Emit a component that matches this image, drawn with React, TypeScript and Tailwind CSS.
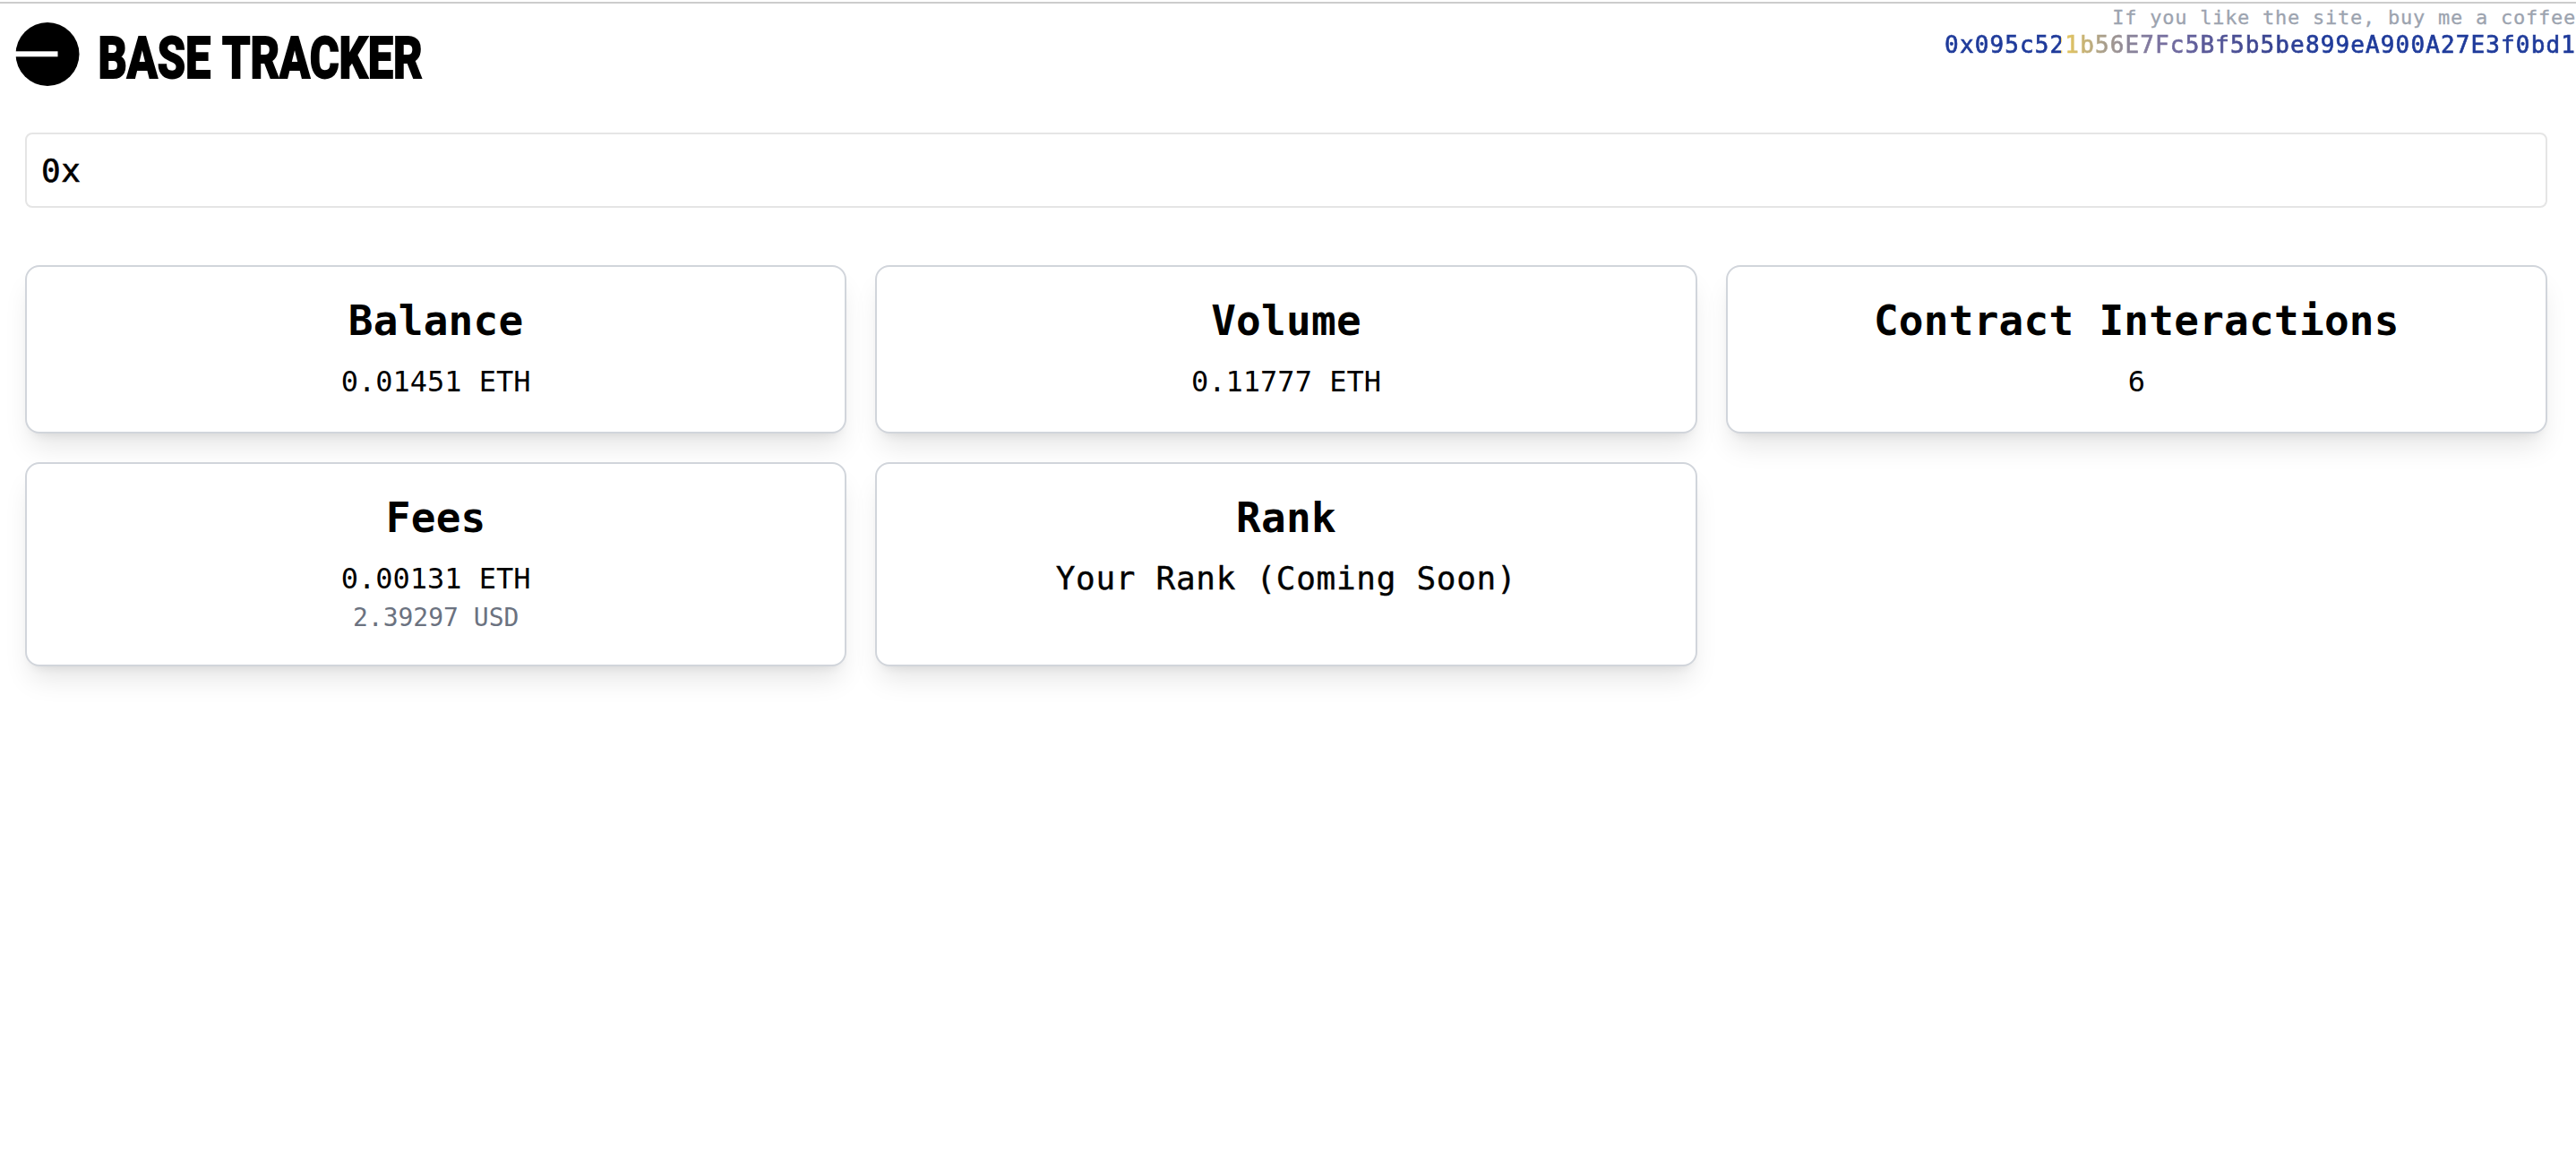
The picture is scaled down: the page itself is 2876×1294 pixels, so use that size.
import clsx from 'clsx'

interface StatCardProps {
  title: string
  value: string
  subValue?: string
  placeholder?: boolean
}

function StatCard({ title, value, subValue, placeholder }: StatCardProps) {
  return (
    <div className="bg-white border-2 border-[#d1d5db] rounded-2xl p-8 pt-7 text-center shadow-[0_20px_30px_-6px_rgba(0,0,0,0.1),0_8px_12px_-8px_rgba(0,0,0,0.1)]">
      <h2 className="text-[46px] leading-16 font-bold tracking-[0.25px]">{title}</h2>
      <p
        className={clsx(
          placeholder
            ? 'mt-2 text-[36px] leading-14 tracking-[0.7px] [-webkit-text-stroke:0.4px_currentColor]'
            : 'mt-3 text-[32px] leading-12'
        )}
      >
        {value}
      </p>
      {subValue && <p className="text-[28px] leading-10 text-[#6b7280]">{subValue}</p>}
    </div>
  )
}

function Logo() {
  return (
    <svg
      width="560"
      height="104"
      viewBox="0 0 560 104"
      className="overflow-visible"
      role="img"
      aria-label="Base Tracker"
    >
      <circle cx="53" cy="56.5" r="35.5" />
      <rect x="16" y="53.3" width="48.5" height="6" fill="#fff" />
      <text
        x="109.5"
        y="82.5"
        fontFamily="Roboto, sans-serif"
        fontWeight="800"
        fontSize="65"
        textLength="362"
        lengthAdjust="spacingAndGlyphs"
        wordSpacing="2"
        stroke="#000"
        strokeWidth="2"
      >
        BASE TRACKER
      </text>
    </svg>
  )
}

export default function App() {
  const stats = [
    { title: 'Balance', value: '0.01451 ETH' },
    { title: 'Volume', value: '0.11777 ETH' },
    { title: 'Contract Interactions', value: '6' },
    { title: 'Fees', value: '0.00131 ETH', subValue: '2.39297 USD' },
    { title: 'Rank', value: 'Your Rank (Coming Soon)', placeholder: true },
  ]

  return (
    <div className="min-h-screen bg-white pt-0.5 text-black font-['DejaVu_Sans_Mono',monospace]">
      <header className="flex justify-between items-start border-t-2 border-[#cccccc] h-[146px]">
        <Logo />
        <div className="text-right whitespace-nowrap">
          <p className="text-[22px] leading-[31px] tracking-[0.75px] text-[#9ca3af] [-webkit-text-stroke:0.3px_currentColor]">
            If you like the site, buy me a coffee
          </p>
          <p className="text-[26px] leading-[30px] tracking-[1.13px] bg-clip-text text-transparent [-webkit-text-stroke:0.7px_transparent] bg-[linear-gradient(90deg,#1e3a9a_0%,#1e3a9a_18.5%,#eccb5a_18.5%,#aba08a_25%,#8c8699_29%,#7a72a0_34%,#5f5d9a_40%,#3c4590_50%,#1e3a9a_60%)]">
            0x095c521b56E7Fc5Bf5b5be899eA900A27E3f0bd1
          </p>
        </div>
      </header>

      <main className="pl-7 pr-8">
        <input
          type="text"
          defaultValue="0x"
          className="block w-full h-[84px] px-4 text-[36px] tracking-[0.7px] border-2 border-[#e5e5e5] rounded-lg outline-none [-webkit-text-stroke:0.6px_currentColor]"
        />

        <div className="mt-16 grid grid-cols-3 gap-8">
          {stats.map((stat, index) => (
            <StatCard key={index} {...stat} />
          ))}
        </div>
      </main>
    </div>
  )
}
